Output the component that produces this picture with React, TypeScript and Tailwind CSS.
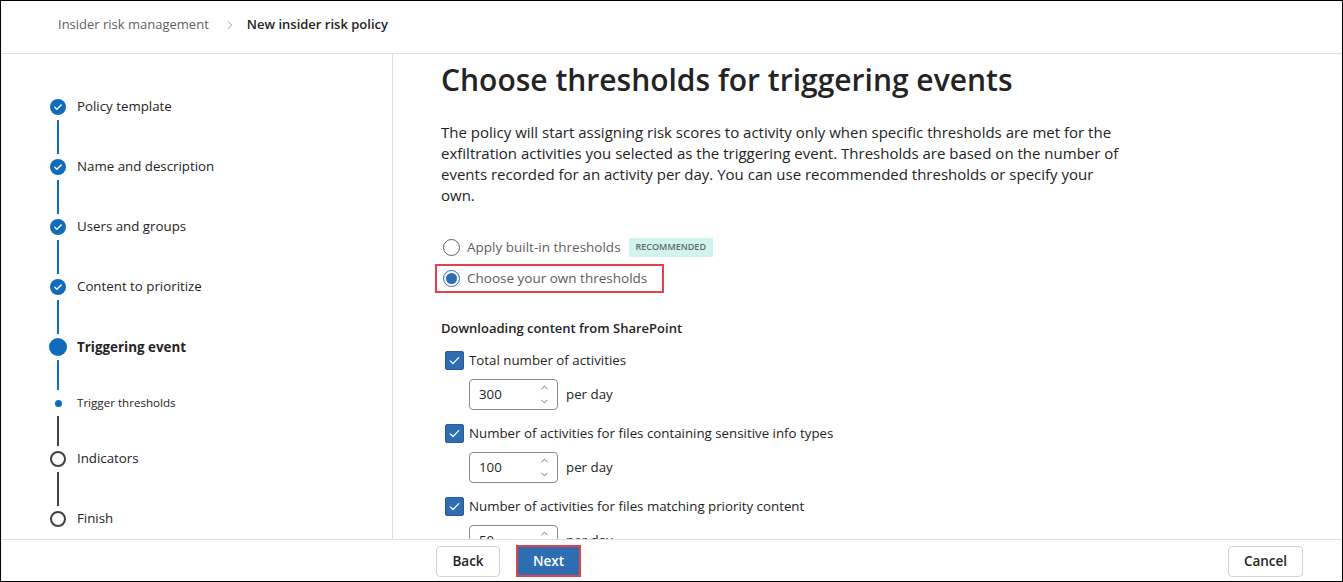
import { ChevronDown, ChevronRight, ChevronUp } from "lucide-react";

type StepState = "done" | "current" | "sub" | "todo";

const steps: { label: string; state: StepState; line?: string; lineH?: string }[] = [
  { label: "Policy template", state: "done", line: "bg-[#0f6cbd]", lineH: "h-[34px]" },
  { label: "Name and description", state: "done", line: "bg-[#0f6cbd]", lineH: "h-[34px]" },
  { label: "Users and groups", state: "done", line: "bg-[#0f6cbd]", lineH: "h-[34px]" },
  { label: "Content to prioritize", state: "done", line: "bg-[#0f6cbd]", lineH: "h-[34px]" },
  { label: "Triggering event", state: "current", line: "bg-[#0f6cbd]", lineH: "h-[30px]" },
  { label: "Trigger thresholds", state: "sub", line: "bg-[#424242]", lineH: "h-[30px]" },
  { label: "Indicators", state: "todo", line: "bg-[#424242]", lineH: "h-[34px]" },
  { label: "Finish", state: "todo" },
];

const StepIcon = ({ state }: { state: StepState }) => {
  if (state === "done")
    return (
      <svg width="16" height="16" viewBox="0 0 16 16">
        <circle cx="8" cy="8" r="8" fill="#0f6cbd" />
        <path d="M4.8 8.2l2.1 2.1 4.3-4.4" fill="none" stroke="#fff" strokeWidth="1.4" strokeLinecap="round" strokeLinejoin="round" />
      </svg>
    );
  if (state === "current") return <div className="h-[18px] w-[18px] rounded-full bg-[#0f6cbd]" />;
  if (state === "sub") return <div className="h-[7px] w-[7px] rounded-full bg-[#0f6cbd]" />;
  return <div className="h-[16px] w-[16px] rounded-full border-2 border-[#424242]" />;
};

const Checkbox = () => (
  <div className="flex h-[19px] w-[19px] items-center justify-center rounded-[2px] border border-[#2a5c99] bg-[#2f6db3]">
    <svg width="13" height="13" viewBox="0 0 12 12">
      <path d="M2 6.3l2.6 2.5 5.3-5.5" fill="none" stroke="#fff" strokeWidth="1.1" strokeLinecap="round" strokeLinejoin="round" />
    </svg>
  </div>
);

const SpinInput = ({ value }: { value: string }) => (
  <div className="flex items-center gap-[8px]">
    <div className="flex h-[31px] w-[89px] items-center justify-between rounded-[4px] border border-[#8a8a8a] pl-[9px] pr-[7px]">
      <span className="text-[13.3px] text-[#242424]">{value}</span>
      <div className="flex flex-col items-center text-[#424242]">
        <ChevronUp size={11} strokeWidth={1.6} />
        <ChevronDown size={11} strokeWidth={1.6} className="mt-[3px]" />
      </div>
    </div>
    <span className="text-[13.3px] text-[#242424]">per day</span>
  </div>
);

const thresholds = [
  { label: "Total number of activities", value: "300" },
  { label: "Number of activities for files containing sensitive info types", value: "100" },
  { label: "Number of activities for files matching priority content", value: "50" },
];

export default function App() {
  return (
    <div
      className="flex h-[582px] w-[1343px] flex-col overflow-hidden border border-black bg-white text-[#242424]"
      style={{ fontFamily: '"Segoe UI", "Open Sans", sans-serif' }}
    >
      {/* Breadcrumb */}
      <header className="flex h-[53px] shrink-0 items-center border-b border-[#e0e0e0] pb-[4px] pl-[57px] text-[13px]">
        <span className="text-[#616161]">Insider risk management</span>
        <ChevronRight size={14} strokeWidth={1.4} className="ml-[14px] mr-[10px] text-[#8a8a8a]" />
        <span className="font-semibold text-[#242424]">New insider risk policy</span>
      </header>

      <div className="flex min-h-0 flex-1">
        {/* Steps */}
        <nav className="w-[392px] shrink-0 border-r border-[#e0e0e0] pl-[48px] pt-[44px]">
          {steps.map((step) => (
            <div key={step.label} className="flex gap-[10px]">
              <div className="flex w-[18px] flex-col items-center">
                <div className="flex h-[18px] items-center justify-center">
                  <StepIcon state={step.state} />
                </div>
                {step.line && <div className={`my-[4px] w-[2px] ${step.lineH} ${step.line}`} />}
              </div>
              <div
                className={`flex h-[18px] items-center ${
                  step.state === "current"
                    ? "text-[13.4px] font-bold"
                    : step.state === "sub"
                      ? "text-[11.6px]"
                      : "text-[13.3px]"
                }`}
              >
                {step.label}
              </div>
            </div>
          ))}
        </nav>

        {/* Main */}
        <main className="min-w-0 flex-1 overflow-hidden pl-[48px] pt-[7px]">
          <h1 className="text-[30px] font-semibold leading-[38px]">Choose thresholds for triggering events</h1>
          <p className="mt-[23px] max-w-[684px] text-[15px] leading-[21px]">
            The policy will start assigning risk scores to activity only when specific thresholds are met for the
            exfiltration activities you selected as the triggering event. Thresholds are based on the number of events
            recorded for an activity per day. You can use recommended thresholds or specify your own.
          </p>

          <div className="mt-[31px] flex h-[20px] items-center pl-[2px] text-[13.5px] text-[#616161]">
            <div className="h-[17px] w-[17px] rounded-full border border-[#616161]" />
            <span className="ml-[7px]">Apply built-in thresholds</span>
            <span className="ml-[8px] flex h-[19px] items-center bg-[#d2f3eb] px-[7px] text-[9px] font-semibold text-[#5c6b67]">
              RECOMMENDED
            </span>
          </div>
          <div className="-ml-[6px] mt-[7px] inline-flex h-[29px] items-center border-2 border-[#e5414b] pl-[6px] pr-[15px] text-[13.5px] text-[#5c5c5c]">
            <div className="flex h-[17px] w-[17px] items-center justify-center rounded-full border border-[#2f6db3]">
              <div className="h-[11px] w-[11px] rounded-full bg-[#2f6db3]" />
            </div>
            <span className="ml-[7px]">Choose your own thresholds</span>
          </div>

          <h2 className="mt-[26px] text-[13px] font-semibold leading-[18px]">Downloading content from SharePoint</h2>
          <div className="mt-[14px] flex flex-col gap-[14px]">
            {thresholds.map((t) => (
              <div key={t.label} className="flex flex-col gap-[9px]">
                <div className="flex h-[19px] items-center gap-[5px] pl-[4px] text-[13.3px]">
                  <Checkbox />
                  <span>{t.label}</span>
                </div>
                <div className="pl-[28px]">
                  <SpinInput value={t.value} />
                </div>
              </div>
            ))}
          </div>
        </main>
      </div>

      {/* Footer */}
      <footer className="flex h-[42px] shrink-0 items-center border-t border-[#e0e0e0] pl-[435px] pr-[39px] pt-[1px] text-[13.5px] font-semibold">
        <button className="h-[31px] w-[64px] rounded-[4px] border border-[#d1d1d1] bg-white text-[#242424]">Back</button>
        <button className="ml-[16px] h-[32px] w-[65px] border-2 border-[#e5414b] bg-[#2f6db3] text-white">Next</button>
        <button className="ml-auto h-[31px] w-[75px] rounded-[4px] border border-[#d1d1d1] bg-white text-[#242424]">
          Cancel
        </button>
      </footer>
    </div>
  );
}
